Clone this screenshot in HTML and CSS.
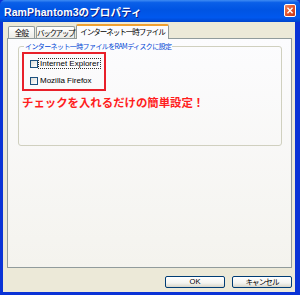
FILE: index.html
```html
<!DOCTYPE html>
<html lang="ja">
<head>
<meta charset="utf-8">
<link rel="stylesheet" href="styles.css">
</head>
<body>
<div class="window">
  <div class="titlebar">
    <span class="title">RamPhantom3のプロパティ</span>
    <span class="close">
      <svg width="12" height="13" viewBox="0 0 12 13"><path d="M3.5 3.8 L8.5 9.2 M8.5 3.8 L3.5 9.2" stroke="#fff" stroke-width="1.6" stroke-linecap="square"/></svg>
    </span>
  </div>
  <div class="frame">
    <div class="tabs">
      <div class="tab tab-general">全般</div>
      <div class="tab tab-backup">バックアップ</div>
      <div class="tab tab-inet active">インターネット一時ファイル</div>
    </div>
    <div class="panel">
      <fieldset class="group">
        <legend class="legend">インターネット一時ファイルをRAMディスクに設定</legend>
        <div class="highlight">
          <label class="check"><span class="box"></span><span class="focus">Internet Explorer</span></label>
          <label class="check"><span class="box"></span><span class="plain">Mozilla Firefox</span></label>
        </div>
        <p class="note">チェックを入れるだけの簡単設定！</p>
      </fieldset>
    </div>
    <div class="buttons">
      <button class="btn">OK</button>
      <button class="btn btn-jp">キャンセル</button>
    </div>
  </div>
</div>
</body>
</html>
```

FILE: styles.css
```css
*, *::before, *::after {
  box-sizing: border-box;
}
html, body {
  margin: 0;
  padding: 0;
}
body {
  width: 300px;
  height: 295px;
  overflow: hidden;
  font-family: "Liberation Sans", "Noto Sans CJK JP", sans-serif;
}
.window {
  width: 300px;
  height: 295px;
  display: flex;
  flex-direction: column;
  background: #0a33d6;
}
.titlebar {
  height: 22px;
  flex: 0 0 22px;
  display: flex;
  align-items: center;
  justify-content: space-between;
  padding: 0 4px 0 4px;
  background: linear-gradient(to bottom, #3f8cf3 0%, #0a5fe8 12%, #0054e3 45%, #0058ee 80%, #0044cc 100%);
  border-radius: 5px 5px 0 0;
}
.title {
  color: #fff;
  font-family: "Liberation Sans", "Noto Sans CJK JP", sans-serif;
  font-weight: bold;
  font-size: 10.5px;
  letter-spacing: 0.1px;
  text-shadow: 1px 1px 0 #0a1e8c;
  margin-top: 1px;
}
.close {
  width: 12px;
  height: 13px;
  margin-top: -1px;
  border: 1px solid #fff;
  border-radius: 2px;
  background: linear-gradient(135deg, #f08a66 0%, #e2532c 50%, #c4381a 100%);
  display: flex;
  align-items: center;
  justify-content: center;
}
.close svg {
  display: block;
}
.frame {
  flex: 1;
  margin: 0 5px 3px 3px;
  background: #ece9d8;
  display: flex;
  flex-direction: column;
  padding: 1px 3px 0 4px;
}
.tabs {
  display: flex;
  align-items: flex-end;
  height: 15px;
  flex: 0 0 15px;
  padding-left: 1px;
  position: relative;
  z-index: 1;
}
.tab {
  height: 12px;
  border: 1px solid #919b9c;
  border-bottom: none;
  border-radius: 2px 2px 0 0;
  background: linear-gradient(to bottom, #ffffff, #ecebe5);
  font-family: "Noto Sans CJK JP", sans-serif;
  font-size: 7.6px;
  letter-spacing: -0.9px;
  line-height: 11px;
  color: #000;
  text-align: center;
  white-space: nowrap;
  margin-right: 1px;
}
.tab-general {
  width: 27px;
}
.tab-backup {
  width: 39px;
  letter-spacing: -1.4px;
}
.tab-inet {
  width: 93px;
  letter-spacing: -1.1px;
}
.tab.active {
  height: 15px;
  line-height: 12px;
  border-top: 2px solid #f0a030;
  background: #fcfcfe;
  margin-bottom: -1px;
}
.panel {
  height: 230px;
  flex: 0 0 230px;
  border: 1px solid #919b9c;
  background: linear-gradient(to bottom, #fcfcfe, #f4f3ee);
  padding: 3px 9px 0 10px;
}
.group {
  margin: 0;
  height: 104px;
  border: 1px solid #d0d0bf;
  border-radius: 3px;
  padding: 0 0 0 4px;
  min-width: 0;
}
.legend {
  margin-left: 1px;
  padding: 0 1px;
  font-family: "Noto Sans CJK JP", sans-serif;
  font-size: 7px;
  letter-spacing: -0.6px;
  line-height: 9px;
  color: #0046d5;
}
.highlight {
  width: 84px;
  height: 39px;
  border: 2px solid #e8202a;
  margin: 1px 0 0 -1px;
  padding: 5px 0 0 6px;
  display: flex;
  flex-direction: column;
  gap: 8px;
}
.check {
  display: flex;
  align-items: center;
  height: 9px;
  font-family: "Liberation Sans", sans-serif;
  font-size: 8px;
  color: #000;
}
.box {
  width: 8px;
  height: 8px;
  border: 1px solid #1c5180;
  background: linear-gradient(135deg, #dcdcd7, #ffffff);
  margin-right: 1px;
  flex: 0 0 auto;
}
.focus {
  outline: 1px dotted #333;
  outline-offset: 0;
  padding: 0 1px;
  line-height: 9px;
}
.plain {
  padding: 0 1px;
}
.note {
  margin: 4px 0 0 -1px;
  font-family: "Noto Sans CJK JP", sans-serif;
  font-weight: bold;
  font-size: 11.4px;
  line-height: 14px;
  color: #ff1e1e;
}
.buttons {
  display: flex;
  justify-content: flex-end;
  gap: 7px;
  margin-top: 8px;
}
.btn {
  width: 60px;
  height: 12px;
  padding: 0;
  border: 1px solid #003c74;
  border-radius: 2px;
  background: linear-gradient(to bottom, #ffffff 0%, #f4f4f0 60%, #d8d5c8 100%);
  font-family: "Liberation Sans", "Noto Sans CJK JP", sans-serif;
  font-size: 7.6px;
  line-height: 10px;
  color: #000;
}
.btn-jp {
  font-family: "Noto Sans CJK JP", sans-serif;
  letter-spacing: -1px;
}
```
